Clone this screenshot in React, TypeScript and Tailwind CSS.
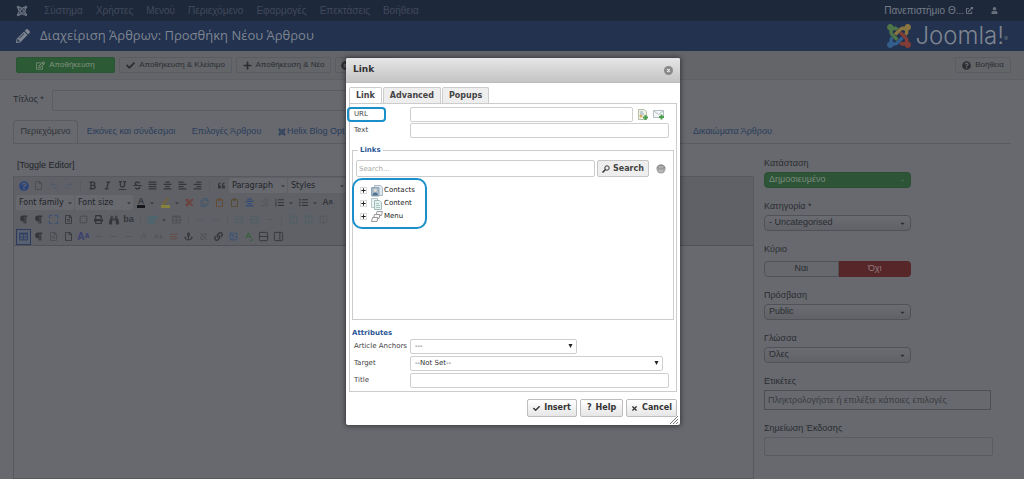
import { ReactNode, useState } from "react";
import { clsx } from "clsx";
import {
  FaAlignCenter,
  FaAlignJustify,
  FaAlignLeft,
  FaAlignRight,
  FaAnchor,
  FaBinoculars,
  FaBold,
  FaCaretDown,
  FaCheck,
  FaCut,
  FaExternalLinkAlt,
  FaItalic,
  FaJoomla,
  FaLink,
  FaListOl,
  FaListUl,
  FaParagraph,
  FaPencilAlt,
  FaPlus,
  FaPrint,
  FaQuestionCircle,
  FaQuoteLeft,
  FaRegClipboard,
  FaRegCopy,
  FaRegEdit,
  FaRegFile,
  FaRegFileAlt,
  FaStrikethrough,
  FaTable,
  FaTimes,
  FaTimesCircle,
  FaUnderline,
  FaUnlink,
  FaUser,
} from "react-icons/fa";
import {
  LuAArrowDown,
  LuColumns2,
  LuImage,
  LuMaximize,
  LuMinus,
  LuPanelRight,
  LuRedo2,
  LuRows2,
  LuSpellCheck,
  LuSquareDashed,
  LuUndo2,
  LuWrapText,
} from "react-icons/lu";

const menuItems = ["Σύστημα", "Χρήστες", "Μενού", "Περιεχόμενο", "Εφαρμογές", "Επεκτάσεις", "Βοήθεια"];

function JoomlaMark() {
  return (
    <svg viewBox="0 32 448 448" className="size-6" aria-hidden="true">
      <path
        fill="#4d7548"
        d="M.6 92.1C.6 58.8 27.4 32 60.4 32c30 0 54.5 21.9 59.2 50.2 32.6-7.6 67.1.6 96.5 30l-44.3 44.3c-20.5-20.5-42.6-16.3-55.4-3.5-14.3 14.3-14.3 37.9 0 52.2l99.5 99.5-44 44.3c-87.7-87.2-49.7-49.7-99.8-99.7-26.8-26.5-35-64.8-24.8-98.9C20.4 144.6.6 120.7.6 92.1z"
      />
      <path
        fill="#8a7440"
        d="M130.1 208.5l44.3 44.3c10-10 89.7-89.7 99.7-99.8 14.3-14.3 37.6-14.3 51.9 0 12.8 12.8 17 35-3.5 55.4l44 44.3c31.2-31.2 38.5-67.6 28.9-101.2 29.2-4.1 51.9-29.2 51.9-59.5 0-33.2-26.8-60.1-59.8-60.1-30.3 0-55.4 22.5-59.5 51.6-33.8-9.9-71.7-1.5-98.3 25.1-18.3 19.1-71.1 71.5-99.6 99.9z"
      />
      <path
        fill="#843c37"
        d="M396.4 360.7c8.2-32.7-.9-68.5-26.3-93.9-11.8-12.2 5 4.7-99.5-99.7l-44.3 44.3 99.7 99.7c14.3 14.3 14.3 37.6 0 51.9-12.8 12.8-35 17-55.4-3.5l-44 44.3c27.6 30.2 68 38.8 102.7 28 5.5 27.4 29.7 48.1 58.9 48.1 33 0 59.8-26.8 59.8-60.1 0-30.2-22.5-55-51.6-59.1z"
      />
      <path
        fill="#345f8c"
        d="M312.1 307.6l-44-44.3c-87 86.4-50.4 50.4-99.7 99.8-14.3 14.3-37.6 14.3-51.9 0-13.1-13.4-16.9-35.3 3.2-55.4l-44-44.3c-30.2 30.2-38 65.2-29.5 98.3-26.7 6-46.2 29.9-46.2 58.2C0 453.2 26.8 480 59.8 480c28.6 0 52.5-19.8 58.6-46.7 32.7 8.2 68.5-.6 94.2-26 32.1-32 12.2-12.4 99.5-99.7z"
      />
    </svg>
  );
}

function ToolbarButton({ icon, children, className }: { icon: ReactNode; children: ReactNode; className?: string }) {
  return (
    <button
      type="button"
      className={clsx(
        "flex h-4 shrink-0 items-center justify-center gap-1 rounded-xs border border-[#5a5c61] text-[8px] whitespace-nowrap text-[#2b2d31] [&>svg]:size-[9px]",
        className,
      )}
    >
      {icon}
      {children}
    </button>
  );
}

function Tool({ label, className, wide, children }: { label: string; className?: string; wide?: boolean; children: ReactNode }) {
  return (
    <button
      type="button"
      aria-label={label}
      className={clsx("flex h-4 shrink-0 items-center justify-center text-[9px]", wide ? "w-6 gap-1" : "w-[15px]", className)}
    >
      {children}
      {wide ? <FaCaretDown className="size-[6px] text-[#3a3d43]" /> : null}
    </button>
  );
}

function Sep() {
  return <span className="mx-1 h-3 w-px shrink-0 bg-[#5a5c61]" />;
}

function ToolSelect({ label }: { label: string }) {
  return (
    <div className="relative mr-px w-[58px] shrink-0">
      <select aria-label={label} className="block h-[15px] w-full appearance-none rounded-xs bg-[#67696e] pl-[3px] font-['DejaVu_Sans','Noto_Sans',sans-serif] text-[8px] text-[#222429]">
        <option>{label}</option>
      </select>
      <FaCaretDown className="pointer-events-none absolute top-[5px] right-px size-[6px] text-[#3a3d43]" />
    </div>
  );
}

function Editor() {
  return (
    <div className="flex-1 border border-[#57595e]">
      <div className="overflow-hidden border-b border-[#505257] bg-[#5f6166] pl-[2px] text-[#34363b]">
        <div className="flex h-[17px] items-center">
          <Tool label="Help" className="text-[#2b457c]"><FaQuestionCircle className="size-[10px]" /></Tool>
          <Tool label="New document" className="text-[#484a4f]"><FaRegFile /></Tool>
          <Tool label="Undo" className="text-[#4e5a6c]"><LuUndo2 /></Tool>
          <Tool label="Redo" className="text-[#4e5a6c]"><LuRedo2 /></Tool>
          <Sep />
          <Tool label="Bold"><FaBold /></Tool>
          <Tool label="Italic"><FaItalic /></Tool>
          <Tool label="Underline"><FaUnderline /></Tool>
          <Tool label="Strikethrough"><FaStrikethrough /></Tool>
          <Tool label="Justify"><FaAlignJustify /></Tool>
          <Tool label="Align center"><FaAlignCenter /></Tool>
          <Tool label="Align left"><FaAlignLeft /></Tool>
          <Tool label="Align right"><FaAlignRight /></Tool>
          <Sep />
          <Tool label="Blockquote"><FaQuoteLeft className="size-[7px]" /></Tool>
          <ToolSelect label="Paragraph" />
          <ToolSelect label="Styles" />
        </div>
        <div className="flex h-[17px] items-center">
          <ToolSelect label="Font family" />
          <ToolSelect label="Font size" />
          <Tool label="Text colour" wide>
            <span className="border-b-3 border-[#15171a] px-px text-[9px] leading-[8px] font-bold">A</span>
          </Tool>
          <Tool label="Highlight colour" wide>
            <span className="border-b-3 border-[#85833d] px-px"><FaPencilAlt className="size-[7px] text-[#756437]" /></span>
          </Tool>
          <Tool label="Cut" className="text-[#6d4039]"><FaCut /></Tool>
          <Tool label="Copy" className="text-[#41566f]"><FaRegCopy /></Tool>
          <Tool label="Paste" className="text-[#65492f]"><FaRegClipboard /></Tool>
          <Tool label="Paste as text" className="text-[#57492f]"><FaRegClipboard /></Tool>
          <Tool label="Indent" className="text-[#344a78]"><FaAlignCenter /></Tool>
          <Tool label="Outdent" className="text-[#56585d]"><FaAlignRight /></Tool>
          <Tool label="Numbered list" wide><FaListOl /></Tool>
          <Tool label="Bullet list" wide><FaListUl /></Tool>
          <Tool label="Uppercase" className="font-bold">A<span className="text-[7px]">a</span></Tool>
        </div>
        <div className="flex h-[17px] items-center">
          <Tool label="Left to right"><FaParagraph /></Tool>
          <Tool label="Right to left"><FaParagraph /></Tool>
          <Tool label="Full screen" className="text-[#2e4a78]"><LuMaximize className="size-[11px]" /></Tool>
          <Tool label="Preview"><FaRegFileAlt /></Tool>
          <Tool label="Source"><LuSquareDashed /></Tool>
          <Tool label="Print"><FaPrint /></Tool>
          <Tool label="Find"><FaBinoculars className="size-[10px]" /></Tool>
          <Tool label="Replace" className="text-[8px] font-bold">ba</Tool>
          <Sep />
          <Tool label="Table" className="text-[#3c6a75]" wide><FaRegEdit /></Tool>
          <Tool label="Delete table" className="text-[#505258]"><FaTable /></Tool>
          <Sep />
          <Tool label="Row before" className="text-[#52575f]"><LuMinus /></Tool>
          <Tool label="Row after" className="text-[#52575f]"><LuMinus /></Tool>
          <Sep />
          <Tool label="Insert row" className="text-[#4b6266]"><LuRows2 /></Tool>
          <Tool label="Insert row below" className="text-[#4b6266]"><LuRows2 /></Tool>
          <Tool label="Delete row" className="text-[#54565b]"><LuMinus /></Tool>
          <Sep />
          <Tool label="Insert column" className="text-[#4b6266]"><LuColumns2 /></Tool>
          <Tool label="Insert column after" className="text-[#4b6266]"><LuColumns2 /></Tool>
          <Tool label="Delete column" className="text-[#54565b]"><LuColumns2 /></Tool>
        </div>
        <div className="flex h-[17px] items-center">
          <Tool label="Guidelines" className="border border-[#2d3a5c] bg-[#59606f] text-[#344266]"><FaTable /></Tool>
          <Tool label="Invisible characters"><FaParagraph /></Tool>
          <Tool label="Non-breaking space" className="text-[#4a4c51]"><FaRegFileAlt /></Tool>
          <Tool label="Page break"><FaRegFile /></Tool>
          <Tool label="Style" className="text-[10px] font-bold text-[#3a3f72]">A<span className="text-[7px]">A</span></Tool>
          <Tool label="Abbreviation" className="text-[#505257]"><LuMinus /></Tool>
          <Tool label="Acronym" className="text-[#505257]"><LuMinus /></Tool>
          <Tool label="Citation" className="text-[#505257]"><LuMinus /></Tool>
          <Tool label="Deleted text" className="text-[#505257]">A</Tool>
          <Tool label="Inserted text" className="text-[#505257]"><LuAArrowDown /></Tool>
          <Tool label="Date" className="text-[#68493c]"><LuWrapText /></Tool>
          <Tool label="Anchor"><FaAnchor /></Tool>
          <Tool label="Unlink" className="text-[#505257]"><FaUnlink className="size-[7px]" /></Tool>
          <Tool label="Link"><FaLink /></Tool>
          <Tool label="Image" className="text-[#344f7c]"><LuImage /></Tool>
          <Tool label="Spell check" className="text-[#2f6136]"><LuSpellCheck className="size-[11px]" /></Tool>
          <Tool label="Read more"><LuRows2 className="size-[11px]" /></Tool>
          <Tool label="Insert article"><LuPanelRight className="size-[11px]" /></Tool>
        </div>
      </div>
    </div>
  );
}

function SideSelect({ id, label, value, green }: { id: string; label: string; value: string; green?: boolean }) {
  return (
    <div className="w-[147px]">
      <label htmlFor={id} className="block h-[17px] leading-4">{label}</label>
      <div className="relative">
        <select
          id={id}
          className={clsx(
            "block h-4 w-full appearance-none rounded-sm border px-1",
            green ? "border-[#2a4f33] bg-[#2d5436] text-[#7d8b80]" : "border-[#505257] bg-linear-to-b from-[#6a6c71] to-[#606267]",
          )}
        >
          <option>{value}</option>
        </select>
        <FaCaretDown className={clsx("pointer-events-none absolute top-[5px] right-[5px] size-[7px]", green && "text-[#3d6546]")} />
      </div>
    </div>
  );
}

function Sidebar() {
  const [featured, setFeatured] = useState(false);

  return (
    <aside className="flex w-[260px] shrink-0 flex-col gap-[10px] pt-px text-[9px] text-[#2a2c31]">
      <SideSelect id="state" label="Κατάσταση" value="Δημοσιευμένο" green />
      <SideSelect id="category" label="Κατηγορία *" value="- Uncategorised" />
      <div className="w-[147px]">
        <p className="h-5 leading-4">Κύριο</p>
        <div className="flex h-4">
          <button
            type="button"
            onClick={() => setFeatured(true)}
            className={clsx("flex-1 rounded-l-sm border border-[#505257]", featured ? "bg-[#2d5436]" : "bg-[#66686d]")}
          >
            Ναι
          </button>
          <button
            type="button"
            onClick={() => setFeatured(false)}
            className={clsx("flex-1 rounded-r-sm", featured ? "bg-[#66686d]" : "bg-[#572629] text-[#8e7b7e]")}
          >
            Όχι
          </button>
        </div>
      </div>
      <SideSelect id="access" label="Πρόσβαση" value="Public" />
      <SideSelect id="language" label="Γλώσσα" value="Όλες" />
      <div className="w-[227px]">
        <label htmlFor="tags" className="block h-[17px] leading-4">Ετικέτες</label>
        <input
          id="tags"
          placeholder="Πληκτρολογήστε ή επιλέξτε κάποιες επιλογές"
          className="block h-5 w-full border border-[#4d4f54] px-[3px] placeholder:text-[#3a3c41]"
        />
      </div>
      <div className="w-[229px]">
        <label htmlFor="version-note" className="block h-[17px] leading-4">Σημείωση Έκδοσης</label>
        <input id="version-note" className="block h-[19px] w-full rounded-xs border border-[#5a5c61]" />
      </div>
    </aside>
  );
}

function Page() {
  return (
    <div className="flex min-h-screen flex-col bg-[#67696e]">
      <nav className="flex h-[21px] items-center bg-[#1d283b] px-4 text-[10px] text-[#414a5a]">
        <FaJoomla className="mr-4 size-3 text-[#69717e]" />
        <div className="flex flex-1 gap-[13px]">
          {menuItems.map((item) => (
            <a key={item} href="#">{item}</a>
          ))}
        </div>
        <a href="#" className="flex items-center gap-[2px] text-[#757c88]">
          Πανεπιστήμιο Θ...
          <FaExternalLinkAlt className="size-[7px]" />
        </a>
        <button type="button" aria-label="Λογαριασμός" className="mr-[10px] ml-[18px]">
          <FaUser className="size-[7px] text-[#69717e]" />
        </button>
      </nav>
      <header className="flex h-[30px] items-center bg-[#22324f] px-4 text-[#7f8590]">
        <FaPencilAlt className="mr-[10px] size-[14px]" />
        <h1 className="flex-1 font-['Open_Sans','Noto_Sans',sans-serif] text-[13px]">
          Διαχείριση Άρθρων: Προσθήκη Νέου Άρθρου
        </h1>
        <div className="flex items-center gap-1">
          <JoomlaMark />
          <span className="font-['Inter',sans-serif] text-[24px] leading-6 font-light">
            Joomla!<sup className="text-[6px]">®</sup>
          </span>
        </div>
      </header>
      <div className="flex h-[29px] items-center gap-1 border-b border-[#5e6065] bg-[#636569] px-4">
        <ToolbarButton icon={<FaRegEdit />} className="w-[99px] border-[#2a5534]! bg-[#2b5a35] text-[#81907f]!">
          Αποθήκευση
        </ToolbarButton>
        <ToolbarButton icon={<FaCheck />} className="w-[113px]">Αποθήκευση &amp; Κλείσιμο</ToolbarButton>
        <ToolbarButton icon={<FaPlus />} className="w-[95px]">Αποθήκευση &amp; Νέο</ToolbarButton>
        <button
          type="button"
          aria-label="Κλείσιμο"
          className="flex h-4 w-[60px] items-center rounded-xs border border-[#5a5c61] pl-[5px] text-[#2b2d31]"
        >
          <FaTimesCircle className="size-[9px]" />
        </button>
        <ToolbarButton icon={<FaQuestionCircle />} className="mr-[-3px] ml-auto w-[56px]">Βοήθεια</ToolbarButton>
      </div>
      <div className="flex h-10 items-center gap-2 px-[13px] text-[9px] text-[#2a2c31]">
        <label htmlFor="article-title">Τίτλος *</label>
        <input id="article-title" className="h-[21px] w-[440px] rounded-xs border border-[#5a5c61]" />
      </div>
      <div className="mx-[13px] flex h-6 border-b border-[#5a5c61] text-[9px] text-[#2a3d5c]">
        <button type="button" className="w-[65px] rounded-t-sm border border-b-0 border-[#5a5c61] text-[#333539]">
          Περιεχόμενο
        </button>
        <button type="button" className="w-[106px]">Εικόνες και σύνδεσμοι</button>
        <button type="button" className="w-[85px]">Επιλογές Άρθρου</button>
        <button type="button" className="flex items-center gap-px pl-[9px] whitespace-nowrap">
          <FaJoomla className="size-2 shrink-0" />
          Helix Blog Opt
        </button>
        <button type="button" className="ml-auto w-[318px] text-left">Δικαιώματα Άρθρου</button>
      </div>
      <div className="flex flex-1 items-stretch gap-[10px] pl-[13px] pt-[10px]">
        <div className="flex min-w-0 flex-1 flex-col">
          <p className="pt-[5px] pb-1 pl-1 text-[9px] leading-[13px] text-[#222429]">[Toggle Editor]</p>
          <Editor />
        </div>
        <Sidebar />
      </div>
    </div>
  );
}

function DialogButton({ icon, children, className }: { icon: ReactNode; children: ReactNode; className?: string }) {
  return (
    <button
      type="button"
      className={clsx(
        "flex h-[18px] items-center justify-center gap-1 rounded-xs border border-[#bdbdbd] bg-linear-to-b from-white to-[#e6e6e6] text-[8px] font-bold text-[#333]",
        className,
      )}
    >
      {icon}
      {children}
    </button>
  );
}

const fieldClass = "h-[15px] rounded-xs border border-[#cfcfcf] bg-white";

function DialogSelect({ id, value, className }: { id: string; value: string; className: string }) {
  return (
    <div className={clsx("relative", className)}>
      <select id={id} className={clsx(fieldClass, "block w-full appearance-none pl-1 text-[7px] text-[#333]")}>
        <option>{value}</option>
      </select>
      <svg viewBox="0 0 5 5" className="pointer-events-none absolute top-[5px] right-1 size-[5px]">
        <path d="M.5 0h4L2.500 4z" fill="#222" />
      </svg>
    </div>
  );
}

function PageAddIcon() {
  return (
    <svg viewBox="0 0 12 12" className="size-3">
      <path d="M1.5.5h6l2 2v8h-8z" fill="#edf1e6" stroke="#b4bea8" />
      <path d="M3 3h3M3 5h4" stroke="#90a9bd" />
      <circle cx="4" cy="7" r="1.500" fill="#d6ab62" />
      <path d="M8.500 6v5M6 8.500h5" stroke="#4d9f50" strokeWidth="2" />
    </svg>
  );
}

function MailAddIcon() {
  return (
    <svg viewBox="0 0 12 12" className="size-3">
      <path d="M.5 1.500h10v7H.5z" fill="#f3f6f8" stroke="#b4bec4" />
      <path d="M1 2l4.500 3.500L10 2" fill="none" stroke="#b4bec4" />
      <path d="M8.500 5.500v5M6 8h5" stroke="#4d9f50" strokeWidth="2" />
    </svg>
  );
}

function ContactsIcon() {
  return (
    <svg viewBox="0 0 12 12" className="size-3">
      <path d="M3.500.5h6l2 2v8h-8z" fill="#e2eaf0" stroke="#a9bac5" />
      <path d="M.5 2.500h7.500v8.500H.5z" fill="#a3bbcb" stroke="#8fa6b6" />
      <circle cx="4.300" cy="5.300" r="1.500" fill="#e9dccd" />
      <path d="M1.500 10.500c0-4 5.500-4 5.500 0z" fill="#54718c" />
    </svg>
  );
}

function ContentIcon() {
  return (
    <svg viewBox="0 0 12 12" className="size-3">
      <path d="M.5.5h6v9h-6z" fill="#eef3f3" stroke="#b9c9c9" />
      <path d="M3.500 2.500h5l2 2v7h-7z" fill="#e6f1ef" stroke="#a0bcba" />
      <path d="M5 5.500h3M5 7.500h4M5 9.500h4" stroke="#a5c5bf" />
    </svg>
  );
}

function MenuIcon() {
  return (
    <svg viewBox="0 0 12 12" className="size-3">
      <g fill="#f8f8f8" stroke="#9a9a9a">
        <path d="M6 .5h5.500l-1 4H5z" />
        <path d="M3.500 3.500H9l-1 4H2.500z" />
        <path d="M1.500 6.500H7l-1 4H.5z" />
      </g>
    </svg>
  );
}

const tree = [
  { name: "Contacts", icon: <ContactsIcon /> },
  { name: "Content", icon: <ContentIcon /> },
  { name: "Menu", icon: <MenuIcon /> },
];

function LinkDialog() {
  const [tab, setTab] = useState("Link");

  return (
    <div
      role="dialog"
      aria-label="Link"
      className="relative w-[334px] rounded-xs bg-white font-['DejaVu_Sans','Noto_Sans',sans-serif] text-[7px] text-[#444] shadow-[0_0_5px_1px_rgba(0,0,0,0.45)]"
    >
      <div className="flex h-[25px] items-center justify-between rounded-t-xs border-b border-[#bbb] bg-linear-to-b from-[#e6e6e6] to-[#c4c4c4] px-[7px]">
        <h2 className="text-[9px] font-bold text-[#333]">Link</h2>
        <button type="button" aria-label="Close" className="flex size-[9px] items-center justify-center rounded-full bg-[#888] text-[#eee]">
          <FaTimes className="size-[5px]" />
        </button>
      </div>

      <div className="px-[3px] pt-1">
        <div role="tablist" className="flex gap-px">
          {["Link", "Advanced", "Popups"].map((name) => (
            <button
              key={name}
              type="button"
              role="tab"
              aria-selected={tab === name}
              onClick={() => setTab(name)}
              className={clsx(
                "h-4 rounded-t-xs border border-b-0 border-[#ccc] px-[6px] text-[8px] font-bold text-[#444]",
                tab === name ? "relative -mb-px bg-white" : "bg-[#eee]",
              )}
            >
              {name}
            </button>
          ))}
        </div>

        <div className="border border-[#ccc] px-[2px] pt-[3px] pb-[3px]">
          <div className="grid grid-cols-[58px_1fr] items-center gap-y-px pr-px">
            <label htmlFor="url" className="pl-[2px]">URL</label>
            <div className="flex items-center gap-1">
              <input id="url" className={clsx(fieldClass, "w-[223px]")} />
              <button type="button" aria-label="Browse"><PageAddIcon /></button>
              <button type="button" aria-label="Email"><MailAddIcon /></button>
            </div>
            <label htmlFor="text" className="pl-[2px]">Text</label>
            <input id="text" className={clsx(fieldClass, "mr-1")} />
          </div>

          <fieldset className="mt-[6px] h-[176px] border border-[#ccc] px-[3px]">
            <legend className="ml-[2px] px-[2px] text-[7px] leading-3 font-bold text-[#2b5797]">Links</legend>
            <div className="mt-1 flex items-center gap-[2px]">
              <input
                aria-label="Search"
                placeholder="Search..."
                className="h-[17px] min-w-0 flex-1 rounded-xs border border-[#ccc] pl-[2px] placeholder:text-[#aaa]"
              />
              <button
                type="button"
                className="flex h-[17px] w-[52px] items-center justify-center gap-[3px] rounded-xs border border-[#c6c6c6] bg-[#eee] text-[8px] font-bold text-[#444]"
              >
                <svg viewBox="0 0 8 8" className="size-2" fill="none" stroke="#333">
                  <circle cx="5" cy="3" r="2.200" />
                  <path d="M3.500 4.500L.5 7.500" strokeWidth="1.500" />
                </svg>
                Search
              </button>
              <button type="button" aria-label="Clear" className="mr-1 ml-[5px]">
                <svg viewBox="0 0 10 10" className="size-[10px]">
                  <circle cx="5" cy="5" r="4.500" fill="#a6a6a6" />
                  <path d="M.5 4.500a4.500 4 0 0 1 9 0z" fill="#8f8f8f" />
                  <path d="M2.500 3h5M3 7h4" stroke="#c9c9c9" />
                </svg>
              </button>
            </div>
            <ul className="mt-[7px] pl-1">
              {tree.map((node) => (
                <li key={node.name} className="flex h-[13px] items-center text-[#222]">
                  <button type="button" aria-label={`Expand ${node.name}`} className="mr-1 flex size-[7px] items-center justify-center border border-[#dadada]">
                    <FaPlus className="size-[5px]" />
                  </button>
                  {node.icon}
                  <a href="#" className="ml-px">{node.name}</a>
                </li>
              ))}
            </ul>
          </fieldset>

          <h3 className="mt-2 text-[7px] leading-[10px] font-bold text-[#2b5797]">Attributes</h3>
          <div className="mt-px grid grid-cols-[58px_1fr] items-center gap-y-[2px] pr-px">
            <label htmlFor="anchors" className="pl-[2px] whitespace-nowrap">Article Anchors</label>
            <DialogSelect id="anchors" value="---" className="w-[167px]" />
            <label htmlFor="target" className="pl-[2px]">Target</label>
            <DialogSelect id="target" value="--Not Set--" className="w-[253px]" />
            <label htmlFor="title" className="pl-[2px]">Title</label>
            <input id="title" className={clsx(fieldClass, "mr-1")} />
          </div>
        </div>

        <div className="flex justify-end gap-[3px] pt-[7px] pb-2">
          <DialogButton icon={<FaCheck className="size-[7px]" />} className="w-[50px]">Insert</DialogButton>
          <DialogButton icon={<span>?</span>} className="w-[43px]">Help</DialogButton>
          <DialogButton icon={<FaTimes className="size-[7px]" />} className="w-[51px]">Cancel</DialogButton>
        </div>
      </div>

      <svg viewBox="0 0 8 8" className="absolute right-[2px] bottom-px size-2" stroke="#555" strokeWidth="0.800">
        <path d="M0 8L8 0M3 8L8 3M6 8L8 6" />
      </svg>
      {/* callouts */}
      <div className="pointer-events-none absolute top-[49px] left-px h-[15px] w-[39px] rounded-[4px] border-2 border-[#1b8fc9]" />
      <div className="pointer-events-none absolute top-[120px] left-[6px] h-[51px] w-[75px] rounded-[10px] border-2 border-[#1b8fc9]" />
    </div>
  );
}

export default function App() {
  return (
    <div className="relative overflow-hidden font-['Liberation_Sans','Noto_Sans',sans-serif]">
      <Page />
      <div className="absolute inset-0 flex items-start justify-center pt-[58px] pl-[2px]">
        <LinkDialog />
      </div>
    </div>
  );
}
